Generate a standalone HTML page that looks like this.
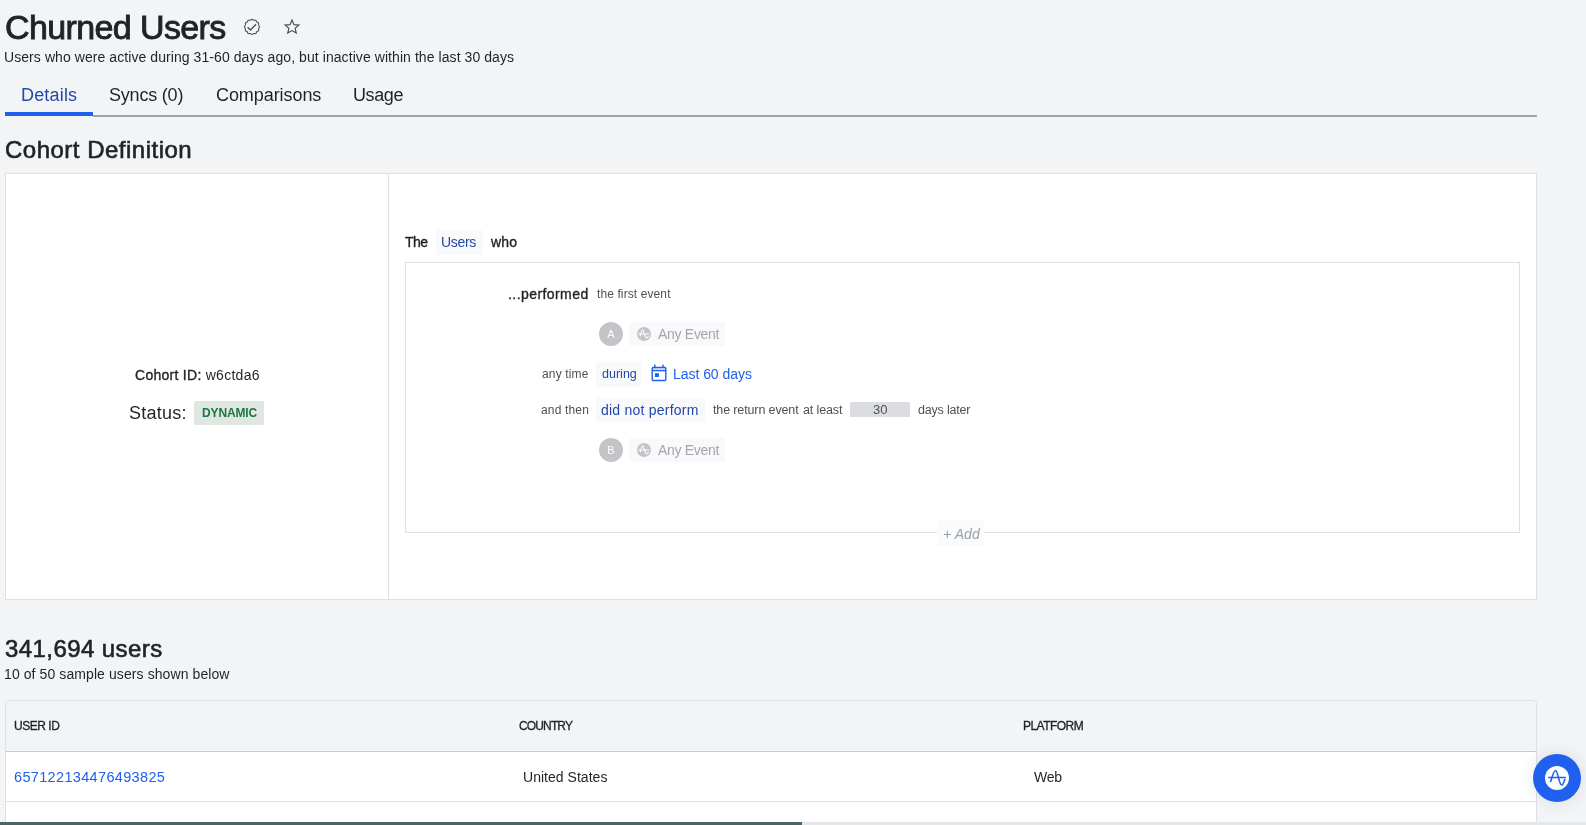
<!DOCTYPE html>
<html><head><meta charset="utf-8"><title>Churned Users</title>
<style>
html,body{margin:0;padding:0;width:1586px;height:825px;overflow:hidden;background:#f3f4f6;}
body{position:relative;font-family:"Liberation Sans",sans-serif;}
.t{position:absolute;white-space:nowrap;line-height:1;will-change:transform;}
.t b{font-weight:700;}
.sb{font-weight:400 !important;-webkit-text-stroke-width:0.026em;}
.bx{position:absolute;box-sizing:border-box;}
.card{background:#fff;border:1px solid #dfe0e3;box-sizing:content-box;}
.tbl{border:1px solid #dfe0e3;border-radius:4px;background:#f3f4f6;box-sizing:content-box;}
.pill{background:#f8f9fb;border-radius:2px;}
.circ{will-change:transform;width:24px;height:24px;border-radius:50%;background:#c3c4c8;color:#fff;font-size:11px;line-height:24px;text-align:center;}
.evi{width:14.5px;height:14.5px;border-radius:50%;background:#c3c4c8;}
.evi svg{display:block}
.fab{width:48px;height:48px;border-radius:50%;background:#1f60ef;box-shadow:0 0 18px rgba(0,0,0,0.10);}
.fab svg{display:block}
</style></head><body>

<div class="bx" style="left:5px;top:112px;width:88px;height:4px;background:#1f60ef"></div>
<div class="bx" style="left:93px;top:115px;width:1444px;height:2px;background:#a1a3a9"></div>
<svg class="bx" style="left:243px;top:18px" width="18" height="18" viewBox="0 0 18 18"><path d="M16.55,8.90 L16.43,9.39 L16.14,9.84 L15.82,10.26 L15.62,10.67 L15.58,11.13 L15.65,11.66 L15.68,12.19 L15.54,12.68 L15.19,13.04 L14.71,13.28 L14.23,13.48 L13.84,13.74 L13.58,14.13 L13.38,14.61 L13.14,15.09 L12.78,15.44 L12.29,15.58 L11.76,15.55 L11.23,15.48 L10.77,15.52 L10.36,15.72 L9.94,16.04 L9.49,16.33 L9.00,16.45 L8.51,16.33 L8.06,16.04 L7.64,15.72 L7.23,15.52 L6.77,15.48 L6.24,15.55 L5.71,15.58 L5.23,15.44 L4.86,15.09 L4.62,14.61 L4.42,14.13 L4.16,13.74 L3.77,13.48 L3.29,13.28 L2.81,13.04 L2.46,12.68 L2.32,12.19 L2.35,11.66 L2.42,11.13 L2.38,10.67 L2.18,10.26 L1.86,9.84 L1.57,9.39 L1.45,8.90 L1.57,8.41 L1.86,7.96 L2.18,7.54 L2.38,7.13 L2.42,6.67 L2.35,6.14 L2.32,5.61 L2.46,5.13 L2.81,4.76 L3.29,4.52 L3.77,4.32 L4.16,4.06 L4.42,3.67 L4.62,3.19 L4.86,2.71 L5.22,2.36 L5.71,2.22 L6.24,2.25 L6.77,2.32 L7.23,2.28 L7.64,2.08 L8.06,1.76 L8.51,1.47 L9.00,1.35 L9.49,1.47 L9.94,1.76 L10.36,2.08 L10.77,2.28 L11.23,2.32 L11.76,2.25 L12.29,2.22 L12.78,2.36 L13.14,2.71 L13.38,3.19 L13.58,3.67 L13.84,4.06 L14.23,4.32 L14.71,4.52 L15.19,4.76 L15.54,5.12 L15.68,5.61 L15.65,6.14 L15.58,6.67 L15.62,7.13 L15.82,7.54 L16.14,7.96 L16.43,8.41 L16.55,8.90Z" fill="none" stroke="#4d5058" stroke-width="1.1"/><path d="M4.6,9.2 L7.5,12.1 L13,6.3" fill="none" stroke="#4d5058" stroke-width="1.4"/></svg>
<svg class="bx" style="left:283px;top:18px" width="18" height="18" viewBox="0 0 18 18"><path d="M9.00,2.10 L10.94,6.63 L15.85,7.08 L12.14,10.32 L13.23,15.12 L9.00,12.60 L4.77,15.12 L5.86,10.32 L2.15,7.08 L7.06,6.63Z" fill="none" stroke="#4d5058" stroke-width="1.2" stroke-linejoin="miter"/></svg>
<div class="bx card" style="left:5px;top:173px;width:1530px;height:425px"></div>
<div class="bx" style="left:388px;top:174px;width:1px;height:425px;background:#dfe0e3"></div>
<div class="bx pill" style="left:194px;top:401px;width:70px;height:24px;background:#e0e6e1;border-radius:2px"></div>
<div class="bx pill" style="left:436px;top:230px;width:47px;height:25px"></div>
<div class="bx" style="left:405px;top:262px;width:1115px;height:271px;border:1px solid #dfe0e3;background:#fff"></div>
<div class="bx circ" style="left:599px;top:322px">A</div>
<div class="bx pill" style="left:629px;top:322px;width:96px;height:24px"></div>
<div class="bx evi" style="left:636.7px;top:326.5px"><svg width="14.5" height="14.5" viewBox="0 0 15 15"><path d="M1.2,7.2 L12.8,7.2 M3.3,9.6 C4.2,6 4.8,2.9 5.8,2.9 C7.1,2.9 8,11.4 9.8,11.4 C10.6,11.4 11.3,10.4 11.9,9.3" fill="none" stroke="#fff" stroke-width="1.1"/></svg></div>
<div class="bx pill" style="left:596px;top:362px;width:45px;height:25px"></div>
<svg class="bx" style="left:651px;top:364px" width="16" height="18" viewBox="0 0 16 18"><rect x="1.2" y="3.5" width="13.6" height="13" rx="1" fill="none" stroke="#1f60ef" stroke-width="1.4"/><line x1="1.2" y1="6.6" x2="14.8" y2="6.6" stroke="#1f60ef" stroke-width="1.4"/><rect x="1.2" y="3.5" width="13.6" height="3.1" fill="#1f60ef" fill-opacity="0.15"/><rect x="3.1" y="0.6" width="1.4" height="3.2" rx="0.5" fill="#1f60ef"/><rect x="11.3" y="0.6" width="1.4" height="3.2" rx="0.5" fill="#1f60ef"/><rect x="4" y="9.2" width="3.9" height="3.8" fill="#1f60ef"/></svg>
<div class="bx pill" style="left:596px;top:398px;width:109px;height:24px"></div>
<div class="bx" style="left:850px;top:402px;width:60px;height:15px;background:#dcdde1"></div>
<div class="bx circ" style="left:599px;top:438px">B</div>
<div class="bx pill" style="left:629px;top:438px;width:96px;height:24px"></div>
<div class="bx evi" style="left:636.7px;top:442.8px"><svg width="14.5" height="14.5" viewBox="0 0 15 15"><path d="M1.2,7.2 L12.8,7.2 M3.3,9.6 C4.2,6 4.8,2.9 5.8,2.9 C7.1,2.9 8,11.4 9.8,11.4 C10.6,11.4 11.3,10.4 11.9,9.3" fill="none" stroke="#fff" stroke-width="1.1"/></svg></div>
<div class="bx pill" style="left:937px;top:520px;width:47px;height:26px;background:#fafbfc"></div>
<div class="bx tbl" style="left:5px;top:700px;width:1530px;height:200px"></div>
<div class="bx" style="left:6px;top:751px;width:1530px;height:1px;background:#c9cbcf"></div>
<div class="bx" style="left:6px;top:752px;width:1530px;height:49px;background:#fff"></div>
<div class="bx" style="left:6px;top:801px;width:1530px;height:1px;background:#dfe0e3"></div>
<div class="bx" style="left:6px;top:802px;width:1530px;height:30px;background:#fff"></div>
<div class="bx" style="left:0;top:822px;width:1586px;height:3px;background:#e6e7e9"></div>
<div class="bx" style="left:0;top:822px;width:802px;height:3px;background:#4c636a"></div>
<div class="bx fab" style="left:1533px;top:754px"><svg width="48" height="48" viewBox="0 0 48 48"><circle cx="24" cy="24" r="12" fill="#fff"/><path d="M15.2,23.5 L32.9,23.5 M17.5,28 C19.2,22 21,16.5 22.6,16.5 C24.8,16.5 26,31 28.8,31 C30.2,31 31.2,27.5 32,25" fill="none" stroke="#1f60ef" stroke-width="1.6"/></svg></div>

<div class="t sb" id="title" style="left:5.18px;top:9.72px;font-size:34px;font-weight:600;color:#1f2227;letter-spacing:-0.615px;">Churned Users</div>
<div class="t" id="sub" style="left:4.25px;top:50.01px;font-size:14px;font-weight:400;color:#1f2227;letter-spacing:0.072px;">Users who were active during 31-60 days ago, but inactive within the last 30 days</div>
<div class="t" id="tab1" style="left:20.85px;top:85.80px;font-size:18px;font-weight:400;color:#2449a8;letter-spacing:0.178px;">Details</div>
<div class="t" id="tab2" style="left:108.86px;top:85.80px;font-size:18px;font-weight:400;color:#1f2227;letter-spacing:-0.200px;">Syncs (0)</div>
<div class="t" id="tab3" style="left:215.80px;top:85.80px;font-size:18px;font-weight:400;color:#1f2227;letter-spacing:-0.070px;">Comparisons</div>
<div class="t" id="tab4" style="left:353.16px;top:85.80px;font-size:18px;font-weight:400;color:#1f2227;letter-spacing:-0.404px;">Usage</div>
<div class="t sb" id="cohdef" style="left:4.91px;top:137.72px;font-size:24px;font-weight:600;color:#1f2227;letter-spacing:0.494px;">Cohort Definition</div>
<div class="t" id="cid" style="left:134.69px;top:368.01px;font-size:14px;font-weight:400;color:#1f2227;letter-spacing:0.276px;"><span class="sb">Cohort ID:</span> w6ctda6</div>
<div class="t" id="status" style="left:128.76px;top:403.71px;font-size:18px;font-weight:400;color:#1f2227;letter-spacing:0.232px;">Status:</div>
<div class="t" id="dyn" style="left:202.16px;top:406.81px;font-size:12px;font-weight:700;color:#1b7843;letter-spacing:-0.128px;">DYNAMIC</div>
<div class="t sb" id="the" style="left:405.05px;top:234.60px;font-size:14px;font-weight:600;color:#1f2227;letter-spacing:-0.538px;">The</div>
<div class="t" id="users" style="left:441.25px;top:234.60px;font-size:14px;font-weight:400;color:#2348a6;letter-spacing:-0.325px;">Users</div>
<div class="t sb" id="who" style="left:491.07px;top:234.60px;font-size:14px;font-weight:600;color:#1f2227;letter-spacing:0.161px;">who</div>
<div class="t sb" id="perf" style="left:507.89px;top:286.72px;font-size:14px;font-weight:600;color:#1f2227;letter-spacing:0.427px;">...performed</div>
<div class="t" id="first" style="left:596.54px;top:288.00px;font-size:12px;font-weight:400;color:#4d5058;letter-spacing:0.103px;">the first event</div>
<div class="t" id="anyA" style="left:658.04px;top:326.91px;font-size:14px;font-weight:400;color:#a4a6ab;letter-spacing:-0.290px;">Any Event</div>
<div class="t" id="anytime" style="left:542.05px;top:367.70px;font-size:12px;font-weight:400;color:#4d5058;letter-spacing:0.155px;">any time</div>
<div class="t" id="during" style="left:601.65px;top:367.71px;font-size:12.5px;font-weight:400;color:#2348a6;letter-spacing:0.012px;">during</div>
<div class="t" id="last60" style="left:672.61px;top:366.91px;font-size:14px;font-weight:400;color:#1f60ef;letter-spacing:-0.045px;">Last 60 days</div>
<div class="t" id="andthen" style="left:540.75px;top:403.91px;font-size:12px;font-weight:400;color:#4d5058;letter-spacing:0.160px;">and then</div>
<div class="t" id="dnp" style="left:600.91px;top:402.81px;font-size:14px;font-weight:400;color:#2348a6;letter-spacing:0.232px;">did not perform</div>
<div class="t" id="ret" style="left:712.57px;top:404.00px;font-size:12.5px;font-weight:400;color:#4d5058;letter-spacing:-0.128px;">the return event</div>
<div class="t" id="atleast" style="left:802.64px;top:404.00px;font-size:12.5px;font-weight:400;color:#4d5058;letter-spacing:-0.123px;">at least</div>
<div class="t" id="thirty" style="left:872.66px;top:403.01px;font-size:13px;font-weight:400;color:#4d5058;letter-spacing:0.000px;">30</div>
<div class="t" id="dayslater" style="left:917.75px;top:404.00px;font-size:12.5px;font-weight:400;color:#4d5058;letter-spacing:-0.186px;">days later</div>
<div class="t" id="anyB" style="left:658.04px;top:442.91px;font-size:14px;font-weight:400;color:#a4a6ab;letter-spacing:-0.318px;">Any Event</div>
<div class="t" id="add" style="left:942.80px;top:526.81px;font-size:14px;font-weight:400;color:#9b9ea4;letter-spacing:0.075px;font-style:italic;">+ Add</div>
<div class="t sb" id="count" style="left:5.35px;top:636.91px;font-size:24px;font-weight:600;color:#1f2227;letter-spacing:0.423px;">341,694 users</div>
<div class="t" id="sample" style="left:4.39px;top:666.72px;font-size:14px;font-weight:400;color:#1f2227;letter-spacing:0.091px;">10 of 50 sample users shown below</div>
<div class="t sb" id="h1" style="left:14.28px;top:720.00px;font-size:12px;font-weight:600;color:#1f2227;letter-spacing:-0.463px;">USER ID</div>
<div class="t sb" id="h2" style="left:518.57px;top:720.00px;font-size:12px;font-weight:600;color:#1f2227;letter-spacing:-0.864px;">COUNTRY</div>
<div class="t sb" id="h3" style="left:1022.51px;top:720.00px;font-size:12px;font-weight:600;color:#1f2227;letter-spacing:-0.533px;">PLATFORM</div>
<div class="t" id="uid" style="left:14.18px;top:770.00px;font-size:14.5px;font-weight:400;color:#1f60ef;letter-spacing:0.335px;">657122134476493825</div>
<div class="t" id="us" style="left:523.25px;top:769.91px;font-size:14px;font-weight:400;color:#1f2227;letter-spacing:0.031px;">United States</div>
<div class="t" id="web" style="left:1033.55px;top:769.91px;font-size:14px;font-weight:400;color:#1f2227;letter-spacing:-0.190px;">Web</div>
</body></html>
